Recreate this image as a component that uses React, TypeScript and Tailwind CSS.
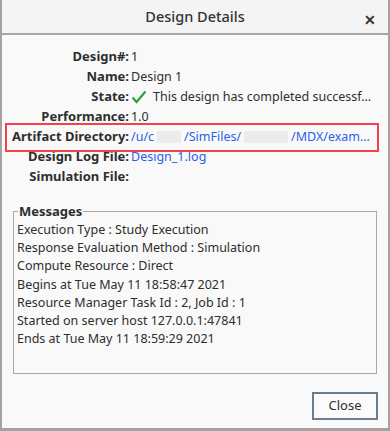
import React from "react";

const labelCls = "w-[127px] shrink-0 text-right text-[13px] font-bold text-[#2e2e2e]";

function Row({ label, children }: { label: string; children?: React.ReactNode }) {
  return (
    <div className="flex h-[20px] items-center whitespace-nowrap">
      <div className={labelCls}>{label}</div>
      <div className="ml-[2px] flex min-w-0 flex-1 items-center overflow-hidden pr-[10px] text-[#2e2e2e]">{children}</div>
    </div>
  );
}

export default function App() {
  const messages = [
    "Execution Type : Study Execution",
    "Response Evaluation Method : Simulation",
    "Compute Resource : Direct",
    "Begins at Tue May 11 18:58:47 2021",
    "Resource Manager Task Id : 2, Job Id : 1",
    "Started on server host 127.0.0.1:47841",
    "Ends at Tue May 11 18:59:29 2021",
  ];
  return (
    <div
      className="flex h-[431px] w-[390px] flex-col border-x-[2px] border-b-[3px] border-[#a3a3a3] bg-[#f9f9f9] text-[12.5px] text-[#2e2e2e]"
      style={{ fontFamily: '"Noto Sans", "Open Sans", sans-serif' }}
    >
      <div className="relative flex h-[35px] shrink-0 items-center justify-center border-b-[2px] border-[#a6a6a6] bg-[#f4f4f4]">
        <span className="text-[14.5px] font-medium text-[#333]">Design Details</span>
        <span className="absolute right-[12px] top-[9px] text-[14px] font-bold text-[#333]">✕</span>
      </div>
      <div className="flex flex-1 flex-col">
        <div className="mt-[12px] flex flex-col">
          <Row label="Design#:">1</Row>
          <Row label="Name:">Design 1</Row>
          <Row label="State:">
            <svg width="16" height="14" viewBox="0 0 16 14" className="mr-[6px] shrink-0">
              <path d="M1.5 7.5 L5.5 12 L14.5 1.5" fill="none" stroke="#26a53a" strokeWidth="2.2" />
            </svg>
            <span>This design has completed successf…</span>
          </Row>
          <Row label="Performance:">1.0</Row>
          <div className="relative">
            <div className="pointer-events-none absolute left-[3px] right-[9px] top-[-4px] bottom-[-5px] border-[2px] border-[#f0424a]" />
            <Row label="Artifact Directory:">
              <span className="flex items-center text-[#2b5fe8]">
                <span>/u/c</span>
                <span className="mx-[3px] inline-block h-[12px] w-[24px] bg-[#ececec]" />
                <span>/SimFiles/</span>
                <span className="mx-[3px] inline-block h-[12px] w-[44px] bg-[#ececec]" />
                <span>/MDX/exam…</span>
              </span>
            </Row>
          </div>
          <Row label="Design Log File:">
            <span className="text-[#2b5fe8]">Design_1.log</span>
          </Row>
          <Row label="Simulation File:"></Row>
        </div>
        <div className="relative mx-[11px] mt-[24px] h-[163px] border border-[#a9a9a9] px-[3px] pt-[9px]">
          <span className="absolute left-[4px] top-[-10px] bg-[#f9f9f9] px-[1px] text-[13px] font-bold text-[#2e2e2e]">Messages</span>
          <div className="flex flex-col">
            {messages.map((m) => (
              <div key={m} className="h-[18.2px] whitespace-nowrap leading-[18px]">
                {m}
              </div>
            ))}
          </div>
        </div>
        <div className="mt-[18px] flex justify-end pr-[10px]">
          <button className="h-[28px] w-[66px] border-[2px] border-[#6b7d8f] bg-[#fbfbfb] text-[13px] text-[#2e2e2e]">
            Close
          </button>
        </div>
      </div>
    </div>
  );
}
